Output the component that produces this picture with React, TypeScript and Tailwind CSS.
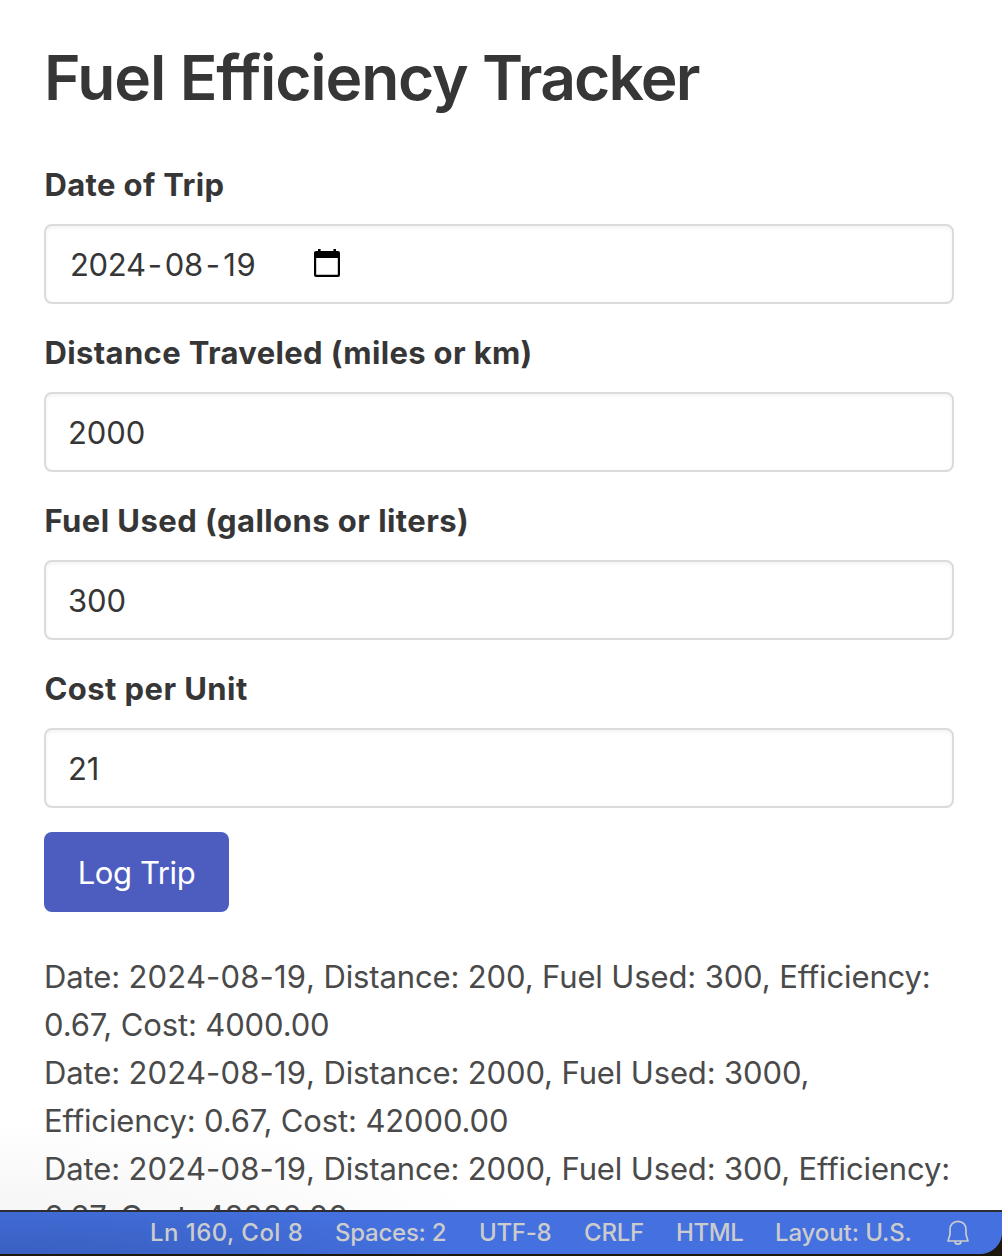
import React from "react";

const fieldClass =
  "mt-4 flex h-20 items-center rounded-lg border-2 border-[#dbdbdb] bg-white px-[22px] pt-px text-[31px] leading-[48px] text-[#363636] shadow-[inset_0_2px_4px_rgba(10,10,10,0.05)]";

const labelClass =
  "block h-12 whitespace-nowrap pl-[0.5px] pt-px text-[31px] font-bold leading-[48px]";

const fields = [
  { label: "Distance Traveled (miles or km)", value: "2000", spacing: "tracking-[0.35px]" },
  { label: "Fuel Used (gallons or liters)", value: "300", spacing: "tracking-[0.44px]" },
  { label: "Cost per Unit", value: "21", spacing: "tracking-[0.42px]" },
];

const trips = [
  { date: "2024-08-19", lines: [", Distance: 200, Fuel Used: 300, Efficiency:", "0.67, Cost: 4000.00"] },
  { date: "2024-08-19", lines: [", Distance: 2000, Fuel Used: 3000,", "Efficiency: 0.67, Cost: 42000.00"] },
  { date: "2024-08-19", lines: [", Distance: 2000, Fuel Used: 300, Efficiency:", "6.67, Cost: 42000.00"] },
];

function CalendarIcon() {
  return (
    <svg className="-mt-[3px] h-7 w-[26px]" viewBox="0 0 26 28" fill="none">
      <path d="M4 0h2.6v2h12.8V0H22v2h2a2 2 0 0 1 2 2v22a2 2 0 0 1-2 2H2a2 2 0 0 1-2-2V4a2 2 0 0 1 2-2h2zM2.2 9v16.8h21.6V9z" fill="#000" fillRule="evenodd" />
    </svg>
  );
}

function BellIcon() {
  return (
    <svg className="-mt-px ml-[35px] h-[26px] w-[22px] shrink-0" viewBox="0 0 22 26" fill="none" stroke="#cccccc" strokeWidth="1.7" strokeLinejoin="round">
      <path d="M3 14.5V9.5C3 4.8 6.3 1.4 11 1.4s8 3.4 8 8.1v5l2 6.5H1z" />
      <path d="M8 21.2c0 4 6 4 6 0" />
    </svg>
  );
}

export default function App() {
  return (
    <div className="flex h-[1256px] w-[1002px] flex-col overflow-hidden bg-white font-['Inter',sans-serif]">
      <main className="h-[1210px] shrink-0 overflow-hidden bg-[radial-gradient(ellipse_480px_85px_at_0_100%,#f6f6f6_0%,#fafafa_50%,#ffffff_100%)] pl-11 pr-12 pt-[42px] text-[#363636]">
        <h1 className="h-[72px] whitespace-nowrap text-[62.3px] font-semibold leading-[72px] tracking-[-1.17px] [font-feature-settings:'calt'_0]">
          Fuel Efficiency <span className="tracking-[-1.85px]">Tracker</span>
        </h1>
        <form className="mt-[46px]" onSubmit={(e) => e.preventDefault()}>
          <div>
            <label className={`${labelClass} tracking-[0.36px]`}>Date of Trip</label>
            <div className={fieldClass}>
              <div className="flex w-[246px] pl-0.5 tracking-[-0.3px]">
                <span>2024</span>
                <span className="ml-[2px] mr-[3px]">-</span>
                <span>08</span>
                <span className="ml-[3px] mr-[3.5px]">-</span>
                <span className="tracking-[0.7px]">19</span>
              </div>
              <CalendarIcon />
            </div>
          </div>
          {fields.map((field) => (
            <div className="mt-6" key={field.label}>
              <label className={`${labelClass} ${field.spacing}`}>{field.label}</label>
              <div className={fieldClass}>
                <span className="tracking-[-0.1px]">{field.value}</span>
              </div>
            </div>
          ))}
          <button className="mt-6 flex h-20 w-[185px] items-center justify-center rounded-lg bg-[#4d5dbf] pt-px text-[31px] leading-[48px] tracking-[-0.4px] text-white">Log Trip</button>
        </form>
        <div className="mt-[41px] whitespace-nowrap text-[31px] leading-[48px] tracking-[-0.13px] text-[#4a4a4a]">
          {trips.map((trip, i) => (
            <div key={i}>
              <div>
                Date: <span className="tracking-[0.15px]">{trip.date}</span>
                {trip.lines[0]}
              </div>
              <div>{trip.lines[1]}</div>
            </div>
          ))}
        </div>
      </main>
      <footer className="h-[46px] shrink-0 bg-[#1d180d]">
        <div className="flex h-11 items-center whitespace-nowrap rounded-br-[22px] border-t-2 border-[#2c2c34] bg-[#4471df] bg-[radial-gradient(ellipse_480px_90px_at_0_160%,#375cb8_0%,#3b62c5_40%,#4471df_100%)] pl-[150px] text-[24px] font-[450] leading-6 text-[#cccccc]">
          <span className="-mt-px w-[185px] shrink-0 tracking-[0.45px]">Ln 160, Col 8</span>
          <span className="-mt-px w-[144px] shrink-0 tracking-[-0.25px]">Spaces: 2</span>
          <span className="-mt-px w-[105px] shrink-0 tracking-[-0.3px]">UTF-8</span>
          <span className="-mt-px w-[92px] shrink-0 tracking-[-0.2px]">CRLF</span>
          <span className="-mt-px w-[99px] shrink-0 tracking-[-0.4px]">HTML</span>
          <span className="-mt-px w-[137px] shrink-0 tracking-[-0.1px]">Layout: U.S.</span>
          <BellIcon />
        </div>
      </footer>
    </div>
  );
}
